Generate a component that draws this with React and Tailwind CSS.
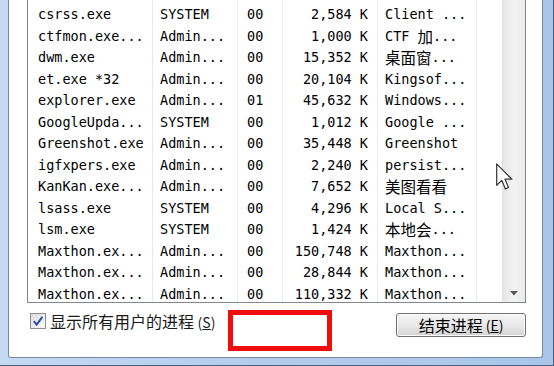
import React from 'react';

const ROWS = [
  ['', '', '', '', ''],
  ['csrss.exe', 'SYSTEM', '00', '2,584 K', 'Client ...'],
  ['ctfmon.exe...', 'Admin...', '00', '1,000 K', 'CTF 加...'],
  ['dwm.exe', 'Admin...', '00', '15,352 K', '桌面窗...'],
  ['et.exe *32', 'Admin...', '00', '20,104 K', 'Kingsof...'],
  ['explorer.exe', 'Admin...', '01', '45,632 K', 'Windows...'],
  ['GoogleUpda...', 'SYSTEM', '00', '1,012 K', 'Google ...'],
  ['Greenshot.exe', 'Admin...', '00', '35,448 K', 'Greenshot'],
  ['igfxpers.exe', 'Admin...', '00', '2,240 K', 'persist...'],
  ['KanKan.exe...', 'Admin...', '00', '7,652 K', '美图看看'],
  ['lsass.exe', 'SYSTEM', '00', '4,296 K', 'Local S...'],
  ['lsm.exe', 'SYSTEM', '00', '1,424 K', '本地会...'],
  ['Maxthon.ex...', 'Admin...', '00', '150,748 K', 'Maxthon...'],
  ['Maxthon.ex...', 'Admin...', '00', '28,844 K', 'Maxthon...'],
  ['Maxthon.ex...', 'Admin...', '00', '110,332 K', 'Maxthon...'],
];

// CJK runs get a bigger font, like the scaled-up SimSun in the shot
function Mixed({ text }) {
  const parts = text.split(/([\u4e00-\u9fff]+)/);
  return parts.map((p, i) =>
    /[\u4e00-\u9fff]/.test(p) ? (
      <span key={i} className="font-['Noto_Sans_CJK_SC',sans-serif] text-[15.5px]">{p}</span>
    ) : (
      <span key={i}>{p}</span>
    )
  );
}

function Row({ r }) {
  const cell = 'h-full flex items-center border-r border-[#e3eaf4] whitespace-pre';
  return (
    <div className="flex h-[21.5px] shrink-0">
      <div className={`${cell} w-[125px] pl-[10px]`}>{r[0]}</div>
      <div className={`${cell} w-[85px] pl-[7px]`}>{r[1]}</div>
      <div className={`${cell} w-[45px] pl-[9px]`}>{r[2]}</div>
      <div className={`${cell} w-[95px] pr-[9px] justify-end`}>{r[3]}</div>
      <div className={`${cell} w-[99px] pl-[7px]`}><Mixed text={r[4]} /></div>
      <div className="h-full w-[25px]" />
    </div>
  );
}

function Cursor() {
  return (
    <svg className="absolute left-[496px] top-[163px]" width="18" height="28" viewBox="0 0 13 20">
      <path
        d="M0.5 0.5 L0.5 16 L4.2 12.4 L6.8 18.6 L9 17.6 L6.5 11.6 L11.5 11.6 Z"
        fill="#ffffff"
        stroke="#3a3a3a"
        strokeWidth="0.9"
        strokeLinejoin="round"
      />
    </svg>
  );
}

export default function App() {
  return (
    <div className="relative w-[554px] h-[366px] overflow-hidden flex pl-[8px] pr-[11px] pb-[7px] bg-linear-to-r from-[#c4d9f2] via-[#b3ccec] to-[#a9c6ea] border-r border-b border-[#4d6283]">
      <div className="flex-1 flex flex-col bg-white border-l border-r border-b border-[#7589a6] rounded-b-[3px] pl-[18px] pr-[16px]">
        {/* process list */}
        <div className="h-[303px] flex border-l border-r border-b border-[#828790] overflow-hidden">
          <div className="flex-1 overflow-hidden">
            <div className="flex flex-col mt-[-17.25px] font-['DejaVu_Sans_Mono','Noto_Sans_CJK_SC',monospace] text-[13.5px] leading-none text-black">
              {ROWS.map((r, i) => (
                <Row key={i} r={r} />
              ))}
            </div>
          </div>
          <div className="w-[23px] flex flex-col justify-end bg-linear-to-r from-[#e6e6e6] via-[#f3f3f3] to-[#ebebeb] border-l border-[#e0e0e0]">
            <div className="h-[17px] flex items-center justify-center">
              <svg width="8" height="5" viewBox="0 0 8 5">
                <path d="M0 0 H8 L4 4.5 Z" fill="#5a5a5a" />
              </svg>
            </div>
          </div>
        </div>

        {/* bottom bar */}
        <div className="flex items-start pt-[7px]">
          <div className="w-[198px] ml-[3px] mt-[2px] h-[18px] flex items-center gap-[4px] font-['Noto_Sans_CJK_SC',sans-serif] text-[16px] leading-none text-[#1a1a1a]">
            <div className="w-[16px] h-[16px] shrink-0 border border-[#8e8f8f] bg-linear-to-br from-[#dcdcdc] to-[#fbfbfb] flex items-center justify-center">
              <svg width="12" height="12" viewBox="0 0 12 12">
                <path d="M1.8 6.2 L4.6 9.6 L10.4 1.8" fill="none" stroke="#2a4ea6" strokeWidth="2" />
              </svg>
            </div>
            <span className="whitespace-nowrap">
              显示所有用户的进程 <span className="text-[14px]">(<span className="underline">S</span>)</span>
            </span>
          </div>
          <div className="w-[104px] h-[41px] border-[5px] border-[#f20d0d]" />
          <button className="ml-auto mt-[3px] w-[130px] h-[24px] rounded-[3px] border border-[#707070] bg-linear-to-b from-[#f4f4f4] via-[#e9e9e9] to-[#d3d3d3] shadow-[inset_0_0_0_1px_#fbfbfb] flex items-center justify-center font-['Noto_Sans_CJK_SC',sans-serif] text-[16px] leading-none text-black">
            结束进程 <span className="ml-[3px] text-[14px]">(<span className="underline">E</span>)</span>
          </button>
        </div>
      </div>
      <Cursor />
    </div>
  );
}
